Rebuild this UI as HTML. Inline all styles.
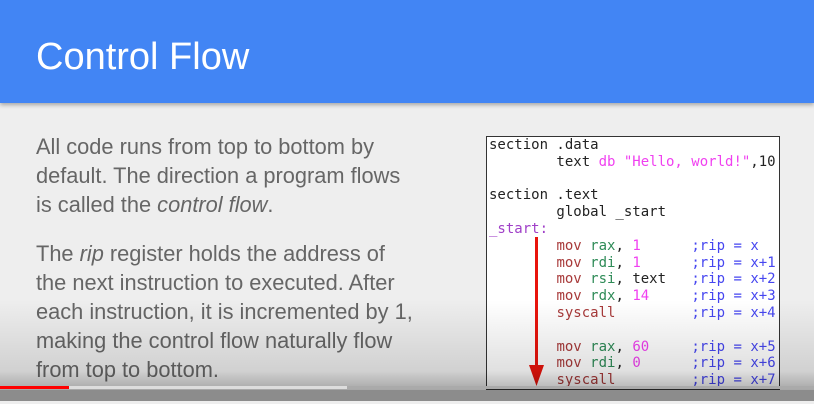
<!DOCTYPE html>
<html><head><style>
html,body{margin:0;padding:0}
body{width:814px;height:401px;overflow:hidden;position:relative;background:#eeeeee;font-family:"Liberation Sans",sans-serif}
.hdr{position:absolute;left:0;top:0;width:814px;height:103px;background:#4285f4;box-shadow:0 2px 4px rgba(0,0,0,.3)}
.hdr h1{position:absolute;left:36px;top:36px;margin:0;font-weight:normal;font-size:38px;line-height:42px;color:#fff}
.txt{position:absolute;left:36px;top:132px;width:420px;font-size:21.8px;line-height:29px;color:#666;white-space:nowrap}
.txt p{margin:0 0 20px 0}
.code{position:absolute;left:486px;top:136px;width:294px;height:254px;background:#fff;border:1px solid #333;box-sizing:border-box}
pre{margin:0;position:absolute;left:2px;top:0px;font-family:"DejaVu Sans Mono",monospace;font-size:14px;line-height:16.8px;color:#222}
.k{color:#a83a3a}.r{color:#2e8b57}.n{color:#f040f0}.c{color:#4646f0}.s{color:#a040c8}
.shade{position:absolute;left:0;top:300px;width:814px;height:101px;background:linear-gradient(rgba(0,0,0,0),rgba(0,0,0,.12) 70%,rgba(0,0,0,.4))}
.bar{position:absolute;top:386px;height:3px}
.bot{position:absolute;left:0;top:390px;width:814px;height:11px;background:#8c8c8c}
</style></head><body>
<div class="hdr"><h1>Control Flow</h1></div>
<div class="txt">
<p>All code runs from top to bottom by<br>default. The direction a program flows<br>is called the <i>control flow</i>.</p>
<p>The <i>rip</i> register holds the address of<br>the next instruction to executed. After<br>each instruction, it is incremented by 1,<br>making the control flow naturally flow<br>from top to bottom.</p>
</div>
<div class="code">
<pre>section .data
        text <span class="n">db "Hello, world!"</span>,10

section .text
        global _start
<span class="s">_start:</span>
        <span class="k">mov</span> <span class="r">rax</span>, <span class="n">1</span>      <span class="c">;rip = x</span>
        <span class="k">mov</span> <span class="r">rdi</span>, <span class="n">1</span>      <span class="c">;rip = x+1</span>
        <span class="k">mov</span> <span class="r">rsi</span>, text   <span class="c">;rip = x+2</span>
        <span class="k">mov</span> <span class="r">rdx</span>, <span class="n">14</span>     <span class="c">;rip = x+3</span>
        <span class="k">syscall</span>         <span class="c">;rip = x+4</span>

        <span class="k">mov</span> <span class="r">rax</span>, <span class="n">60</span>     <span class="c">;rip = x+5</span>
        <span class="k">mov</span> <span class="r">rdi</span>, <span class="n">0</span>      <span class="c">;rip = x+6</span>
        <span class="k">syscall</span>         <span class="c">;rip = x+7</span></pre>
<svg style="position:absolute;left:40px;top:100px" width="20" height="150"><rect x="8" y="0" width="3" height="140" fill="#e8140c"/><polygon points="2,128 17,128 9.5,149" fill="#e8140c"/></svg>
</div>
<div class="shade"></div>
<div class="bar" style="left:0;width:69px;background:#f00"></div>
<div class="bar" style="left:69px;width:278px;background:#ddd"></div>
<div class="bar" style="left:347px;width:467px;background:#aaa"></div>
<div class="bot"></div>
</body></html>
